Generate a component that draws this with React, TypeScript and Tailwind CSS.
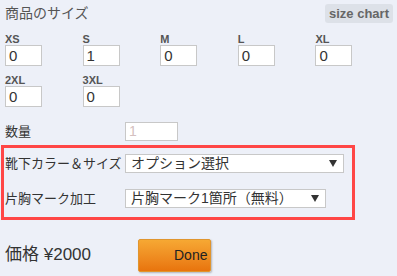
import React from "react";

const sizes = [
  { label: "XS", value: "0" },
  { label: "S", value: "1" },
  { label: "M", value: "0" },
  { label: "L", value: "0" },
  { label: "XL", value: "0" },
];
const sizes2 = [
  { label: "2XL", value: "0" },
  { label: "3XL", value: "0" },
];

const font = "font-['Liberation_Sans','Noto_Sans_CJK_JP',sans-serif]";

function SizeCell({ label, value }: { label: string; value: string }) {
  return (
    <div className="flex flex-col">
      <span className="h-[12px] text-[11px] leading-[12px] font-bold text-[#555]">{label}</span>
      <div className="w-[37px] h-[21px] border border-[#c8c8c8] bg-white px-[3px] text-[15px] leading-[19px] text-[#333]">
        {value}
      </div>
    </div>
  );
}

function FakeSelect({ text, width }: { text: string; width: string }) {
  return (
    <div
      className={`${width} h-[19px] border border-[#c8c8c8] bg-white flex items-center justify-between pl-[5px] pr-[6px]`}
    >
      <span className="text-[14px] leading-[17px] text-[#333]">{text}</span>
      <svg width="8" height="7" viewBox="0 0 8 7">
        <path d="M0 0 H8 L4 7 Z" fill="#333" />
      </svg>
    </div>
  );
}

export default function App() {
  return (
    <div className={`w-[397px] h-[276px] bg-[#edf0f8] overflow-hidden ${font}`}>
      {/* Header */}
      <div className="flex justify-between items-center pl-[5px] pr-[4px] pt-[4px] h-[23px]">
        <span className="text-[14px] text-[#555]">商品のサイズ</span>
        <span className="h-[19px] px-[4px] rounded-[3px] bg-[#dde1e8] text-[13px] leading-[19px] text-[#666] font-bold">
          size chart
        </span>
      </div>

      {/* Sizes */}
      <div className="px-[5px] pt-[10px] flex flex-col gap-[8px]">
        <div className="grid grid-cols-5 w-[388px]">
          {sizes.map((s) => (
            <SizeCell key={s.label} {...s} />
          ))}
        </div>
        <div className="grid grid-cols-5 w-[388px]">
          {sizes2.map((s) => (
            <SizeCell key={s.label} {...s} />
          ))}
        </div>
      </div>

      {/* Quantity */}
      <div className="flex items-center pl-[5px] mt-[15px]">
        <span className="w-[120px] text-[13px] text-[#333]">数量</span>
        <div className="w-[53px] h-[19px] border border-[#c8c8c8] bg-white px-[3px] text-[14px] leading-[17px] text-[#d4c0c0]">
          1
        </div>
      </div>

      {/* Options */}
      <div className="mt-[3px] ml-[1px] w-[354px] h-[75px] border-[3px] border-[#ff4646] pl-[1px] pt-[6px] flex flex-col gap-[16px]">
        <div className="flex items-center">
          <span className="w-[120px] text-[13px] text-[#333]">靴下カラー＆サイズ</span>
          <FakeSelect text="オプション選択" width="w-[219px]" />
        </div>
        <div className="flex items-center">
          <span className="w-[120px] text-[13px] text-[#333]">片胸マーク加工</span>
          <FakeSelect text="片胸マーク1箇所（無料）" width="w-[201px]" />
        </div>
      </div>

      {/* Price */}
      <div className="flex items-start pl-[5px] mt-[19px]">
        <span className="w-[133px] pt-[3px] text-[17px] text-[#333]">価格 ¥2000</span>
        <button className="w-[73px] h-[33px] rounded-[2px] border border-[#e0952e] bg-gradient-to-b from-[#f6a833] to-[#e8740c] shadow-[1px_1px_2px_rgba(0,0,0,0.25)] pl-[35px] text-left text-[14px] text-[#222]">
          Done
        </button>
      </div>
    </div>
  );
}
